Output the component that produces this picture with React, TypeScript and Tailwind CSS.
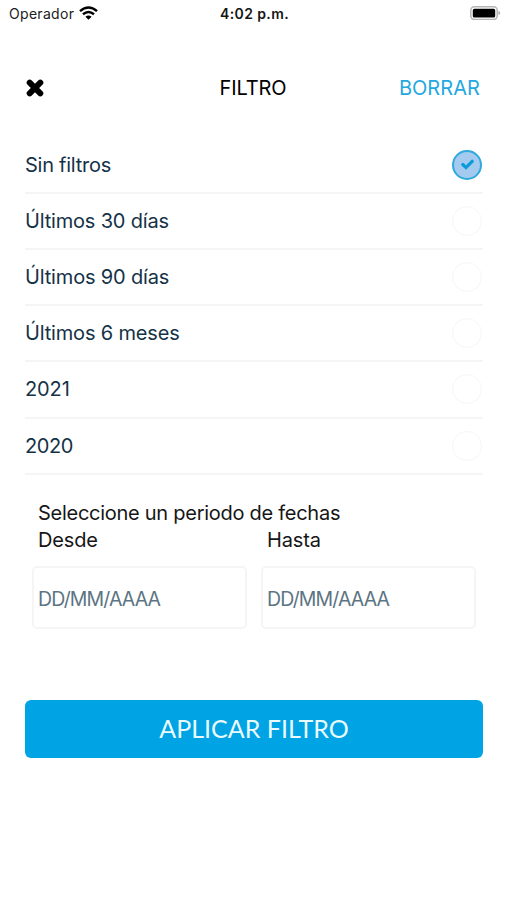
import { useState } from 'react';

interface FilterRowProps {
  label: string;
  className: string;
  selected: boolean;
  onSelect: () => void;
}

const OPTIONS = [
  { label: 'Sin filtros', className: 'tracking-[-0.25px]' },
  { label: 'Últimos 30 días', className: 'tracking-[-0.18px]' },
  { label: 'Últimos 90 días', className: 'tracking-[-0.16px]' },
  { label: 'Últimos 6 meses', className: 'tracking-[-0.17px]' },
  { label: '2021', className: 'tracking-[-0.1px]' },
  { label: '2020', className: 'tracking-[-0.4px]' },
];

const StatusBar = () => (
  <div className="grid h-7 grid-cols-3 items-center pr-[6px] pl-[9px] text-[14px] text-[#202020]">
    <div className="-mt-px flex items-center gap-[5px]">
      <span className="tracking-[0.3px]">Operador</span>
      <svg className="-mt-px h-[14px] w-[19px]" viewBox="0 0 19 14" fill="none" stroke="#000" strokeWidth="2.5">
        <path d="M1 5.1Q9.5-2 18 5.1M4 8.3Q9.5 3.8 15 8.3" />
        <path d="M6.4 10.7Q9.5 8.2 12.6 10.7L9.5 13.8Z" fill="#000" stroke="none" />
      </svg>
    </div>
    <span className="-mt-[2px] -ml-px text-center font-semibold tracking-[0.4px] text-[#151515]">4:02 p.m.</span>
    <svg className="-mt-[2px] h-[14px] w-[31px] justify-self-end" viewBox="0 0 31 14">
      <rect x="0.8" y="0.8" width="26.4" height="12.6" rx="3.6" fill="#fff" stroke="#b5b5b5" strokeWidth="1.5" />
      <rect x="2.8" y="2.8" width="22.4" height="8.8" rx="1.6" fill="#000" />
      <path d="M28.5 4.8q3.5 2.2 0 4.4z" fill="#aaa" />
    </svg>
  </div>
);

const FilterRow = ({ label, className, selected, onSelect }: FilterRowProps) => (
  <button
    type="button"
    onClick={onSelect}
    className="flex h-[56.2px] w-full items-center justify-between border-b-2 border-[#f5f5f6] pr-px text-left text-[20px] text-[#153247]"
  >
    <span className={className}>{label}</span>
    {selected ? (
      <span className="flex size-[30px] items-center justify-center rounded-full border-2 border-[#30a9dc] bg-[#a4cbef]">
        <svg className="h-[11px] w-[13px]" viewBox="0 0 13 11" fill="none" stroke="#0b9bd8" strokeWidth="3.2" strokeLinecap="round">
          <path d="M1.8 5.5L5 8.6L11.2 2.3" />
        </svg>
      </span>
    ) : (
      <span className="size-[30px] rounded-full border border-[#f6f6f6]" />
    )}
  </button>
);

const DateField = ({ label }: { label: string }) => (
  <label className="block w-[215px]">
    <span className="block pl-[6px] leading-[27px] tracking-[-0.15px]">{label}</span>
    <input
      type="text"
      placeholder="DD/MM/AAAA"
      className="mt-3 block h-[63px] w-full rounded-[5px] border-2 border-[#f5f5f6] pt-[3px] pl-[4px] text-[19.5px] tracking-[-0.87px] outline-none placeholder:text-[#5c7483]"
    />
  </label>
);

export default function App() {
  const [selected, setSelected] = useState('Sin filtros');

  return (
    <div className="h-[900px] w-[507px] overflow-hidden bg-white font-['Inter','Liberation_Sans',sans-serif] text-black">
      <StatusBar />

      {/* Header */}
      <header className="mt-[44px] grid h-8 grid-cols-3 items-center pr-[27px] pl-[26px] text-[20px]">
        <button type="button" aria-label="Cerrar" onClick={() => setSelected('Sin filtros')}>
          <svg className="size-[18px]" viewBox="0 0 18 18" fill="none" stroke="#000" strokeWidth="6" strokeLinecap="round">
            <path d="M3.7 3.7L14.3 14.3M14.3 3.7L3.7 14.3" />
          </svg>
        </button>
        <h1 className="text-center tracking-[-0.1px]">FILTRO</h1>
        <button
          type="button"
          onClick={() => setSelected('Sin filtros')}
          className="text-right tracking-[0.05px] text-[#24a8e0]"
        >
          BORRAR
        </button>
      </header>

      {/* Period options */}
      <div className="mt-[33.6px] pr-6 pl-[25px]">
        {OPTIONS.map((option) => (
          <FilterRow
            key={option.label}
            {...option}
            selected={selected === option.label}
            onSelect={() => setSelected(option.label)}
          />
        ))}
      </div>

      {/* Date range */}
      <section className="mt-[25.2px] pr-[31px] pl-8 text-[20px] text-[#161616]">
        <h2 className="pl-[6px] leading-[27px] tracking-[-0.27px]">Seleccione un periodo de fechas</h2>
        <div className="flex gap-[14px]">
          <DateField label="Desde" />
          <DateField label="Hasta" />
        </div>
      </section>

      <div className="mt-[71px] pr-6 pl-[25px]">
        <button
          type="button"
          className="h-[58px] w-full rounded-[6px] bg-[#00a3e3] font-['Lato','Open_Sans',sans-serif] text-[25px] text-[#e9fbff]"
        >
          APLICAR FILTRO
        </button>
      </div>
    </div>
  );
}
